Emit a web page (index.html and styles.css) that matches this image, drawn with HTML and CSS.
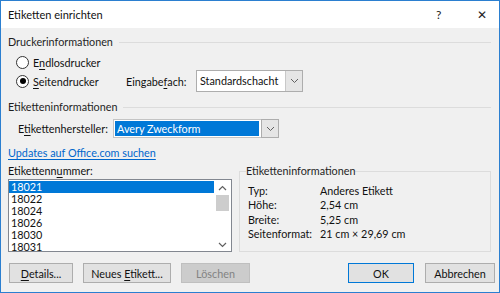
FILE: index.html
```html
<!DOCTYPE html>
<html lang="de">

<head>
    <meta charset="UTF-8">
    <title>Etiketten einrichten</title>
    <link rel="stylesheet" href="styles.css">
</head>

<body>
    <div class="window">
        <div class="titlebar">
            <span class="title">Etiketten einrichten</span>
            <span class="help">?</span>
            <span class="close">&#x2715;</span>
        </div>

        <div class="content">
            <div class="group-header group-printer">
                <span>Druckerinformationen</span>
                <div class="rule"></div>
            </div>

            <label class="radio-row first">
                <span class="radio"></span>
                <span>E<u>n</u>dlosdrucker</span>
            </label>
            <div class="radio-row second">
                <label class="radio-label">
                    <span class="radio checked"></span>
                    <span><u>S</u>eitendrucker</span>
                </label>
                <span class="tray-label">Eingabe<u>f</u>ach:</span>
                <div class="combo combo-tray">
                    <span class="combo-text">Standardschacht</span>
                    <span class="combo-button"><svg width="9" height="6" viewBox="0 0 9 6"><path d="M1 1l3.5 3.5L8 1" fill="none" stroke="#606060" stroke-width="1"/></svg></span>
                </div>
            </div>

            <div class="group-header group-labels">
                <span>Etiketteninformationen</span>
                <div class="rule"></div>
            </div>

            <div class="maker-row">
                <span class="maker-label">E<u>t</u>ikettenhersteller:</span>
                <div class="combo combo-maker">
                    <span class="combo-text selected">Avery Zweckform</span>
                    <span class="combo-button"><svg width="9" height="6" viewBox="0 0 9 6"><path d="M1 1l3.5 3.5L8 1" fill="none" stroke="#606060" stroke-width="1"/></svg></span>
                </div>
            </div>

            <a class="update-link" href="#">Updates auf Office.com suchen</a>

            <div class="columns">
                <div class="number-column">
                    <div class="number-label">Etikettenn<u>u</u>mmer:</div>
                    <div class="listbox">
                        <div class="list-items">
                            <div class="list-item selected">18021</div>
                            <div class="list-item">18022</div>
                            <div class="list-item">18024</div>
                            <div class="list-item">18026</div>
                            <div class="list-item">18030</div>
                            <div class="list-item">18031</div>
                        </div>
                        <div class="scrollbar">
                            <svg width="9" height="6" viewBox="0 0 9 6"><path d="M1 5l3.5-3.5L8 5" fill="none" stroke="#606060" stroke-width="1.2"/></svg>
                            <div class="thumb"></div>
                            <div class="spacer"></div>
                            <svg width="9" height="6" viewBox="0 0 9 6"><path d="M1 1l3.5 3.5L8 1" fill="none" stroke="#606060" stroke-width="1.2"/></svg>
                        </div>
                    </div>
                </div>

                <fieldset class="info-box">
                    <legend>Etiketteninformationen</legend>
                    <div class="info-grid">
                        <span>Typ:</span><span>Anderes Etikett</span>
                        <span>Höhe:</span><span>2,54 cm</span>
                        <span>Breite:</span><span>5,25 cm</span>
                        <span>Seitenformat:</span><span>21 cm × 29,69 cm</span>
                    </div>
                </fieldset>
            </div>

            <div class="button-row">
                <button class="btn btn-details"><u>D</u>etails...</button>
                <button class="btn btn-new">Neues <u>E</u>tikett...</button>
                <button class="btn btn-delete" disabled>Löschen</button>
                <div class="spacer"></div>
                <button class="btn btn-ok">OK</button>
                <button class="btn btn-cancel">Abbrechen</button>
            </div>
        </div>
    </div>
</body>

</html>
```

FILE: styles.css
```css
body {
    margin: 0;
    font-family: 'Lato', 'Noto Sans', sans-serif;
    font-size: 10.8px;
    color: #111;
}

u {
    text-decoration-thickness: 1px;
    text-underline-offset: 2px;
}

.window {
    width: 500px;
    height: 293px;
    box-sizing: border-box;
    border: 1px solid #2b7fd0;
    display: flex;
    flex-direction: column;
}

.titlebar {
    height: 27px;
    background-color: #fff;
    display: flex;
    align-items: center;
}

.title {
    flex: 1;
    padding-left: 7px;
    font-size: 11px;
}

.help {
    width: 16px;
    font-size: 12px;
    color: #222;
    margin-right: 25px;
}

.close {
    width: 16px;
    font-size: 12px;
    color: #222;
    margin-right: 6px;
}

.content {
    flex: 1;
    background-color: #f0f0f0;
    padding: 0 8px 0 7px;
    display: flex;
    flex-direction: column;
}

.group-header {
    display: flex;
    align-items: center;
    gap: 6px;
    height: 14px;
    line-height: 14px;
    color: #1e1e1e;
}

.group-header .rule {
    flex: 1;
    height: 1px;
    background-color: #dcdcdc;
}

.group-printer {
    margin-top: 7px;
}

.radio-row {
    display: flex;
    align-items: center;
    padding-left: 8px;
}

.radio-row.first {
    margin-top: 5px;
    height: 16px;
}

.radio-row.second {
    margin-top: 0;
    height: 22px;
}

.radio-label {
    display: flex;
    align-items: center;
    width: 110px;
}

.radio {
    width: 11px;
    height: 11px;
    border: 1px solid #333;
    border-radius: 50%;
    background-color: #fff;
    margin-right: 4px;
    display: flex;
    align-items: center;
    justify-content: center;
}

.radio.checked::after {
    content: "";
    width: 6px;
    height: 6px;
    border-radius: 50%;
    background-color: #000;
}

.tray-label {
    width: 70px;
}

.combo {
    display: flex;
    height: 22px;
    box-sizing: border-box;
    border: 1px solid #adadad;
    background-color: #fff;
}

.combo-text {
    flex: 1;
    line-height: 20px;
    padding-left: 3px;
}

.combo-button {
    width: 16px;
    background-color: #e5e5e5;
    border-left: 1px solid #c8c8c8;
    display: flex;
    align-items: center;
    justify-content: center;
}

.combo-tray {
    width: 107px;
}

.group-labels {
    margin-top: 8px;
}

.maker-row {
    display: flex;
    align-items: center;
    margin-top: 5px;
    padding-left: 10px;
    height: 19px;
}

.maker-label {
    width: 95px;
}

.combo-maker {
    width: 166px;
    height: 19px;
    border-color: #c4c4c4;
}

.combo-maker .combo-text {
    margin: 1px 2px 1px 1px;
    line-height: 15px;
    padding-left: 2px;
}

.combo-maker .combo-button {
    border: 1px solid #adadad;
    margin: -1px -1px -1px 0;
}

.selected {
    background-color: #0078d7;
    color: #fff;
}

.update-link {
    margin-top: 8px;
    height: 14px;
    line-height: 14px;
    color: #0066cc;
    align-self: flex-start;
    text-underline-offset: 2px;
}

.columns {
    display: flex;
    margin-top: 4px;
    gap: 7px;
}

.number-column {
    width: 224px;
}

.number-label {
    height: 14px;
    line-height: 14px;
}

.listbox {
    margin-top: 1px;
    height: 73px;
    box-sizing: border-box;
    border: 1px solid #828790;
    background-color: #fff;
    display: flex;
}

.list-items {
    flex: 1;
    padding-top: 1px;
}

.list-item {
    height: 12px;
    line-height: 12px;
    padding-left: 2px;
}

.scrollbar {
    width: 17px;
    display: flex;
    flex-direction: column;
    align-items: center;
    padding: 5px 0 3px;
    box-sizing: border-box;
}

.scrollbar .thumb {
    width: 13px;
    height: 16px;
    margin-top: 4px;
    background-color: #cdcdcd;
}

.scrollbar .spacer {
    flex: 1;
}

.info-box {
    flex: 1;
    margin: 0;
    padding: 5px 8px 0 8px;
    height: 88px;
    box-sizing: border-box;
    border: 1px solid #dcdcdc;
    min-width: 0;
}

.info-box legend {
    padding: 0;
    margin-left: -2px;
    height: 14px;
    line-height: 14px;
    color: #1e1e1e;
}

.info-grid {
    display: grid;
    grid-template-columns: 72px 1fr;
    grid-auto-rows: 14.5px;
    align-items: center;
}

.button-row {
    display: flex;
    margin-top: 11px;
    margin-right: -4px;
    height: 20px;
}

.button-row .spacer {
    flex: 1;
}

.btn {
    height: 20px;
    box-sizing: border-box;
    border: 1px solid #adadad;
    background-color: #e1e1e1;
    font-family: 'Lato', 'Noto Sans', sans-serif;
    font-size: 10.8px;
    color: #111;
    padding: 0;
}

.btn-details {
    width: 64px;
    margin-left: 1px;
}

.btn-new {
    width: 88px;
    margin-left: 10px;
}

.btn-delete {
    width: 69px;
    margin-left: 10px;
    background-color: #cccccc;
    border-color: #bfbfbf;
    color: #838383;
}

.btn-ok {
    width: 66px;
    border: 1px solid #0078d7;
}

.btn-cancel {
    width: 70px;
    margin-left: 11px;
}
```
